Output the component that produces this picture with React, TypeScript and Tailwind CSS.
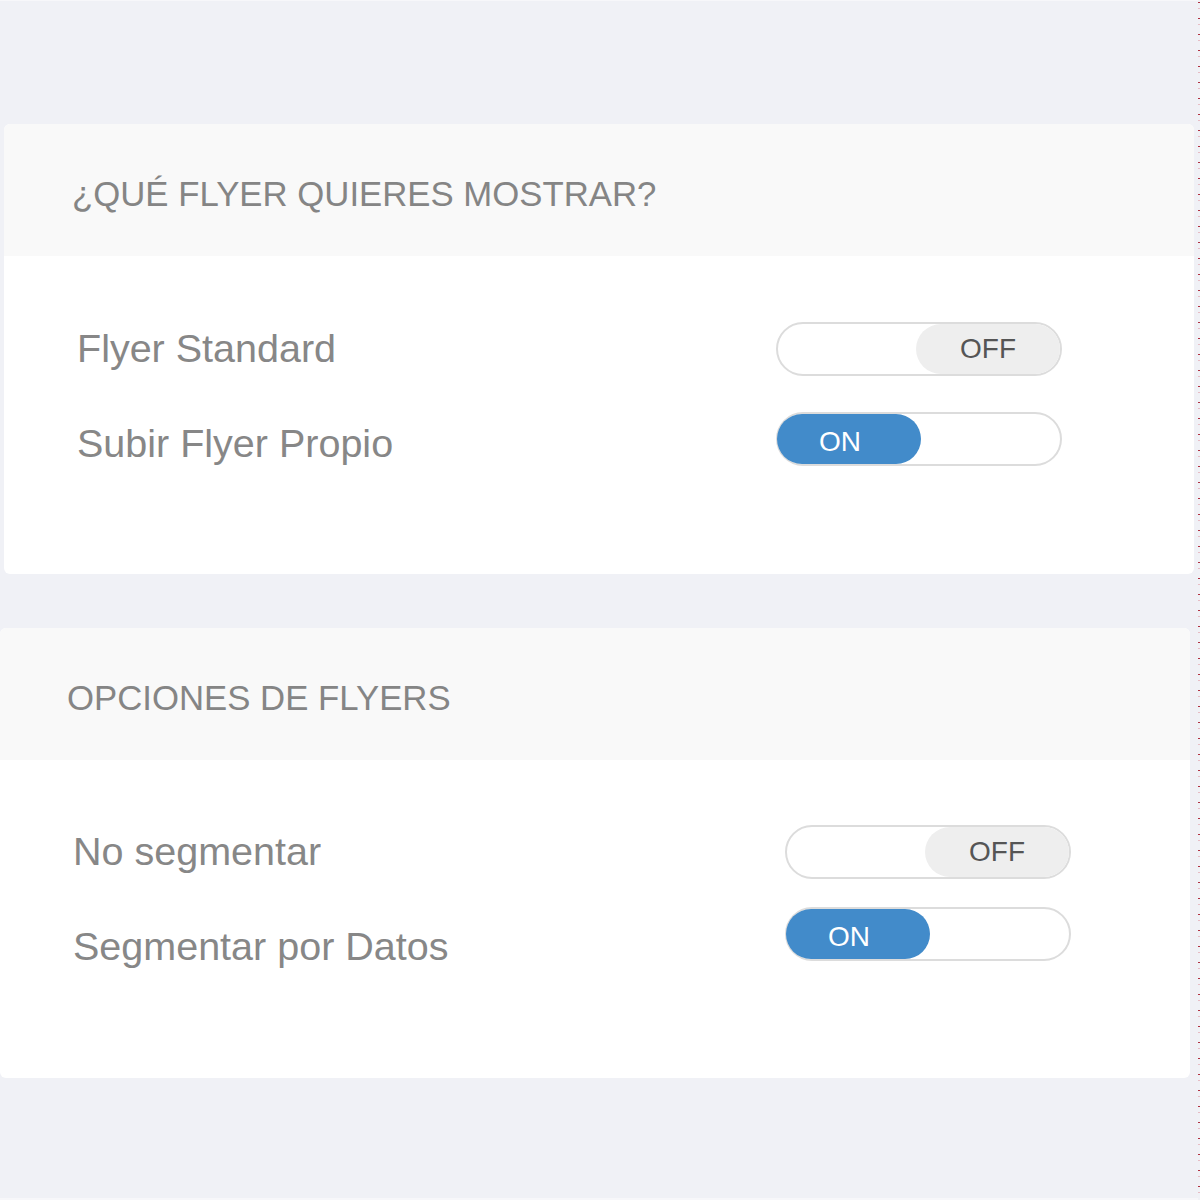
import React from 'react';

type Option = { label: string; on: boolean };

const sections: Array<{
    title: string;
    offset: string;
    options: Option[];
}> = [
    {
        title: '¿QUÉ FLYER QUIERES MOSTRAR?',
        offset: 'ml-[4px]',
        options: [
            { label: 'Flyer Standard', on: false },
            { label: 'Subir Flyer Propio', on: true },
        ],
    },
    {
        title: 'OPCIONES DE FLYERS',
        offset: 'ml-0',
        options: [
            { label: 'No segmentar', on: false },
            { label: 'Segmentar por Datos', on: true },
        ],
    },
];

const Toggle = ({ on }: { on: boolean }) => (
    <div
        className={`flex h-[54px] w-[286px] rounded-full border-2 border-[#dcdcdc] bg-white ${on ? 'justify-start' : 'justify-end'}`}
    >
        <div
            className={`flex h-full w-[144px] items-center justify-center rounded-full text-[28px] leading-none ${on ? '-ml-px bg-[#428bca] pr-[18px] pt-[5px] text-white' : 'bg-[#eeeeee] text-[#555555]'}`}
        >
            {on ? 'ON' : 'OFF'}
        </div>
    </div>
);

const Section = ({ title, offset, options, first }: { title: string; offset: string; options: Option[]; first: boolean }) => (
    <div className={`${offset} w-[1190px] h-[450px] overflow-hidden rounded-[6px] bg-white`}>
        {/* Header */}
        <div className={`h-[132px] bg-[#f9f9f9] pt-[53px] ${first ? 'pl-[68px]' : 'pl-[67px]'}`}>
            <h2 className="text-[34.75px] font-normal leading-none text-[#858585]">{title}</h2>
        </div>

        {/* Options */}
        <div className="flex">
            <div className={`flex flex-col pl-[73px] ${first ? 'pt-[73px] gap-[55px]' : 'pt-[72px] gap-[55px]'}`}>
                {options.map((o) => (
                    <span key={o.label} className="text-[39.5px] leading-none text-[#878787]">
                        {o.label}
                    </span>
                ))}
            </div>
            <div
                className={`ml-auto flex flex-col ${first ? 'mr-[132px] pt-[66px] gap-[36px]' : 'mr-[119px] pt-[65px] gap-[28px]'}`}
            >
                {options.map((o) => (
                    <Toggle key={o.label} on={o.on} />
                ))}
            </div>
        </div>
    </div>
);

export default function App() {
    return (
        <div
            className="flex h-[1200px] w-[1200px] bg-[#f0f1f6]"
            style={{ fontFamily: '"Liberation Sans", Arial, sans-serif' }}
        >
            <div className="flex flex-1 flex-col">
                <div className="h-px bg-[#f7f7fa]" />
                <div className="flex flex-col gap-[54px] pt-[123px]">
                    {sections.map((s, i) => (
                        <Section key={s.title} title={s.title} offset={s.offset} options={s.options} first={i === 0} />
                    ))}
                </div>
                <div className="mt-auto h-[2px] bg-[#f7f7fa]" />
            </div>
            <div className="w-[2px] bg-[repeating-linear-gradient(to_bottom,transparent_0_2px,#b03040_2px_3px,transparent_3px_8px,#e6bcc4_8px_9px,transparent_9px_16px)]" />
        </div>
    );
}
